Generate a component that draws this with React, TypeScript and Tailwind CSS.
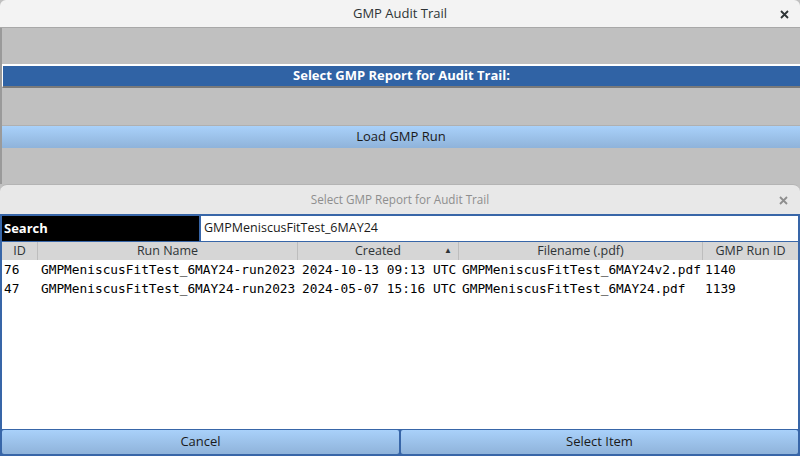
import React from 'react';

const rows = [
  { id: '76', name: 'GMPMeniscusFitTest_6MAY24-run2023', created: '2024-10-13 09:13 UTC', file: 'GMPMeniscusFitTest_6MAY24v2.pdf', run: '1140' },
  { id: '47', name: 'GMPMeniscusFitTest_6MAY24-run2023', created: '2024-05-07 15:16 UTC', file: 'GMPMeniscusFitTest_6MAY24.pdf', run: '1139' },
];

const ui = { fontFamily: '"Open Sans", "Noto Sans", sans-serif' };
const mono = { fontFamily: '"DejaVu Sans Mono", monospace' };

function CloseIcon({ className }: { className: string }) {
  return (
    <svg width="9" height="9" viewBox="0 0 9 9" className={className}>
      <path d="M1 1 L8 8 M8 1 L1 8" stroke="currentColor" strokeWidth="1.8" />
    </svg>
  );
}

export default function App() {
  return (
    <div className="w-[800px] h-[456px] overflow-hidden bg-[#c0c0c0] flex flex-col text-[13px]" style={ui}>
      {/* Main window title */}
      <div className="h-[28px] shrink-0 bg-[#f3f3f3] border-b border-[#a8a8a8] rounded-t-[6px] flex items-center justify-center relative">
        <span className="text-[#2e3436] font-medium text-[13px]">GMP Audit Trail</span>
        <CloseIcon className="absolute right-[11px] top-[10px] text-[#2e3436]" />
      </div>

      <div className="flex flex-col border-l-2 border-[#9a9a9a] flex-1">
        <div className="h-[36px] shrink-0" />
        <div className="h-[24px] shrink-0 bg-[#3063a5] border-t-2 border-white border-l border-[#3063a5] border-b-2 border-b-[#7a7a7a] flex items-center justify-center">
          <span className="text-white font-bold text-[13px]">Select GMP Report for Audit Trail:</span>
        </div>
        <div className="h-[37px] shrink-0" />
        <div className="h-[23px] shrink-0 border-t border-[#b0b0b0] bg-gradient-to-b from-[#a9d1fa] to-[#8fb3da] flex items-center justify-center">
          <span className="text-[#1a1a1a]">Load GMP Run</span>
        </div>
      </div>

      {/* Dialog */}
      <div className="h-[272px] shrink-0 bg-[#e8e8e8] rounded-t-[7px] border-t border-[#b4b4b4] flex flex-col">
        <div className="h-[29px] shrink-0 flex items-center justify-center relative">
          <span className="text-[#8e8e8e] text-[11.7px]">Select GMP Report for Audit Trail</span>
          <CloseIcon className="absolute right-[12px] top-[11px] text-[#8e8e8e]" />
        </div>
        <div className="flex-1 flex flex-col border-2 border-[#3866a8] bg-white">
          <div className="h-[25px] shrink-0 flex">
            <div className="w-[199px] bg-black text-white font-bold flex items-center pl-[2px] border-r-2 border-[#3866a8]">Search</div>
            <div className="flex-1 flex items-center pl-[3px] text-[#1a1a1a] text-[12.5px]">GMPMeniscusFitTest_6MAY24</div>
          </div>
          <div className="h-[19px] shrink-0 flex bg-[#d6d6d6] border-t border-[#3866a8] text-[#2e3436] text-[12.5px]">
            <div className="w-[36px] flex items-center justify-center border-r border-[#bdbdbd]">ID</div>
            <div className="w-[260px] flex items-center justify-center border-r border-[#bdbdbd]">Run Name</div>
            <div className="w-[161px] flex items-center justify-center border-r border-[#bdbdbd] relative">
              Created
              <span className="absolute right-[6px] top-[2px] text-[8px]">▲</span>
            </div>
            <div className="w-[244px] flex items-center justify-center border-r border-[#bdbdbd]">Filename (.pdf)</div>
            <div className="flex-1 flex items-center justify-center">GMP Run ID</div>
          </div>
          <div className="flex-1 flex flex-col text-[12.8px] text-black" style={mono}>
            {rows.map((r) => (
              <div key={r.id} className="h-[19px] flex items-center whitespace-pre">
                <span className="w-[38px] pl-[2px]">{r.id}</span>
                <span className="w-[260px] pl-[1px]">{r.name}</span>
                <span className="w-[161px] pl-[2px]">{r.created}</span>
                <span className="w-[244px] pl-[1px]">{r.file}</span>
                <span>{r.run}</span>
              </div>
            ))}
          </div>
          <div className="h-[25px] shrink-0 flex bg-[#3866a8] gap-[2px] pt-[1px]">
            <div className="flex-1 bg-gradient-to-b from-[#a9d1fa] to-[#8fb3da] flex items-center justify-center text-[#1a1a1a] rounded-[2px]">Cancel</div>
            <div className="flex-1 bg-gradient-to-b from-[#a9d1fa] to-[#8fb3da] flex items-center justify-center text-[#1a1a1a] rounded-[2px]">Select Item</div>
          </div>
        </div>
      </div>
    </div>
  );
}
